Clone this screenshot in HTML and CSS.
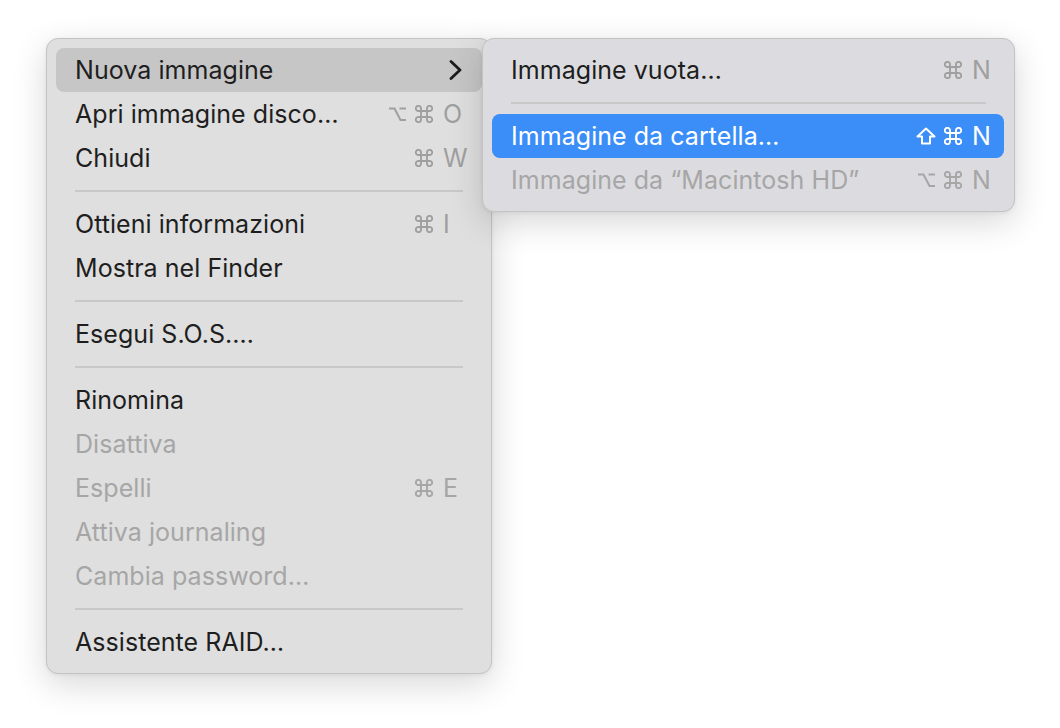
FILE: index.html
```html
<!DOCTYPE html>
<html lang="it">
<head>
<meta charset="utf-8">
<title>Menu</title>
<link rel="stylesheet" href="styles.css">
</head>
<body>
<svg class="defs" width="0" height="0" aria-hidden="true">
  <symbol id="cmd" viewBox="0 0 18 18">
    <path d="M6 6V3.6A2.6 2.6 0 1 0 3.6 6H6M6 6H12M12 6V3.6A2.6 2.6 0 1 1 14.4 6H12M12 6V12M12 12V14.4A2.6 2.6 0 1 0 14.4 12H12M12 12H6M6 12V14.4A2.6 2.6 0 1 1 3.6 12H6M6 12V6" fill="none" stroke="currentColor" stroke-width="1.9" stroke-linejoin="round"/>
  </symbol>
  <symbol id="opt" viewBox="0 0 19 18">
    <path d="M1 3.5H6.5L12.5 15H18M11.5 3.5H18" fill="none" stroke="currentColor" stroke-width="2" stroke-linejoin="miter"/>
  </symbol>
  <symbol id="shift" viewBox="0 0 20 18">
    <path d="M10 1.5L18.5 9.5H14V16.5H6V9.5H1.5Z" fill="none" stroke="currentColor" stroke-width="2" stroke-linejoin="round"/>
  </symbol>
</svg>
<div class="stage">
  <div class="menu main">
    <div class="item hl"><span class="label">Nuova immagine</span><svg class="chev" width="14" height="20" viewBox="0 0 14 20"><polyline points="2,1.5 11,10 2,18.5" fill="none" stroke="#1c1c1c" stroke-width="2.8" stroke-linecap="round" stroke-linejoin="round"/></svg></div>
    <div class="item"><span class="label">Apri immagine disco…</span><span class="sc"><svg class="mk opt"><use href="#opt"/></svg><svg class="mk"><use href="#cmd"/></svg><span class="key">O</span></span></div>
    <div class="item"><span class="label">Chiudi</span><span class="sc"><svg class="mk"><use href="#cmd"/></svg><span class="key">W</span></span></div>
    <div class="sep"></div>
    <div class="item"><span class="label">Ottieni informazioni</span><span class="sc"><svg class="mk"><use href="#cmd"/></svg><span class="key">I</span></span></div>
    <div class="item"><span class="label">Mostra nel Finder</span></div>
    <div class="sep"></div>
    <div class="item"><span class="label">Esegui S.O.S.…</span></div>
    <div class="sep"></div>
    <div class="item"><span class="label">Rinomina</span></div>
    <div class="item off"><span class="label">Disattiva</span></div>
    <div class="item off"><span class="label">Espelli</span><span class="sc"><svg class="mk"><use href="#cmd"/></svg><span class="key">E</span></span></div>
    <div class="item off"><span class="label">Attiva journaling</span></div>
    <div class="item off"><span class="label">Cambia password…</span></div>
    <div class="sep"></div>
    <div class="item"><span class="label">Assistente RAID…</span></div>
  </div>
  <div class="menu sub">
    <div class="item"><span class="label">Immagine vuota…</span><span class="sc"><svg class="mk"><use href="#cmd"/></svg><span class="key">N</span></span></div>
    <div class="sep"></div>
    <div class="item sel"><span class="label">Immagine da cartella…</span><span class="sc"><svg class="mk shift"><use href="#shift"/></svg><svg class="mk"><use href="#cmd"/></svg><span class="key">N</span></span></div>
    <div class="item off"><span class="label">Immagine da “Macintosh HD”</span><span class="sc"><svg class="mk opt"><use href="#opt"/></svg><svg class="mk"><use href="#cmd"/></svg><span class="key">N</span></span></div>
  </div>
</div>
</body>
</html>
```

FILE: styles.css
```css
html, body {
  margin: 0;
  padding: 0;
  background: #ffffff;
}

body {
  font-family: Inter, "Noto Sans", "Liberation Sans", sans-serif;
  color: #1e1e1e;
}

.defs {
  position: absolute;
  width: 0;
  height: 0;
  overflow: hidden;
}

.stage {
  position: relative;
  width: 1060px;
  height: 728px;
  padding: 38px 0 0 46px;
  box-sizing: border-box;
}

.menu {
  box-sizing: border-box;
  background: #dfdfdf;
  border: 1px solid #c3c3c3;
  border-radius: 12px;
  box-shadow: 0 10px 34px rgba(0, 0, 0, 0.16), 0 1px 4px rgba(0, 0, 0, 0.06);
}

.main {
  width: 446px;
  padding: 9px 0;
}

.sub {
  position: absolute;
  top: 38px;
  left: 482px;
  width: 533px;
  padding: 9px 0;
  background: #dcdce0;
}

.item {
  display: flex;
  align-items: center;
  height: 44px;
  margin: 0 9px;
  padding: 0 9px 0 19px;
  border-radius: 8px;
  font-size: 25px;
  letter-spacing: 0.05px;
  white-space: nowrap;
}

.sub .item {
  margin: 0 10px 0 9px;
}

.label {
  flex: 1;
}

.item.hl {
  background: #c6c6c7;
}

.chev {
  margin-right: 10px;
}

.item.sel {
  background: #3b8ef7;
  color: #ffffff;
}

.item.off {
  color: #a6a6a6;
}

.sc {
  display: flex;
  align-items: center;
  color: #9f9f9f;
}

.item.sel .sc {
  color: #ffffff;
}

.item.off .sc {
  color: #a6a6a6;
}

.mk {
  width: 18px;
  height: 18px;
  margin-right: 10px;
}

.mk.opt {
  width: 19px;
  margin-right: 8px;
}

.mk.shift {
  width: 20px;
  margin-right: 8px;
}

.key {
  width: 30px;
}

.sub .key {
  width: 23px;
}

.sep {
  height: 2px;
  margin: 10px 28px;
  background: #c8c8c9;
}
```
